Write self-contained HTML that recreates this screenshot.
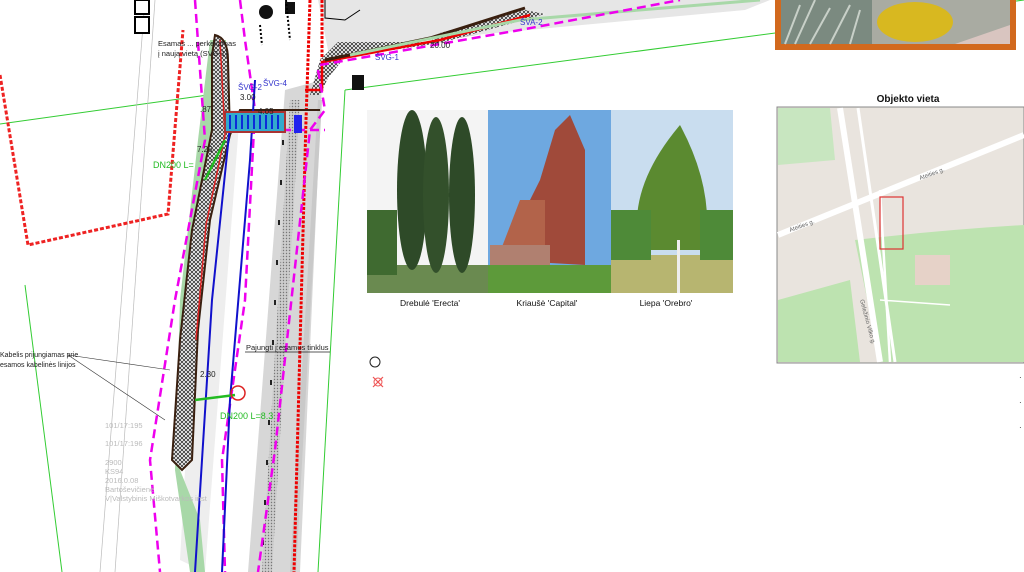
<!DOCTYPE html>
<html><head><meta charset="utf-8"><style>
html,body{margin:0;padding:0;background:#fff;width:1024px;height:572px;overflow:hidden}
svg{display:block}
text{font-family:"Liberation Sans",sans-serif}
</style></head><body>
<svg width="1024" height="572" viewBox="0 0 1024 572" xmlns="http://www.w3.org/2000/svg">
<defs>
<pattern id="hatch" width="4" height="4" patternUnits="userSpaceOnUse"><rect width="4" height="4" fill="#fff"/><path d="M0 0L4 4M4 0L0 4" stroke="#333" stroke-width="0.8"/></pattern>
<pattern id="dots" width="3" height="3" patternUnits="userSpaceOnUse"><rect width="3" height="3" fill="#ccc"/><circle cx="1.5" cy="1.5" r="0.7" fill="#777"/></pattern>
</defs>
<g stroke="#3c3" stroke-width="1" fill="none">
<path d="M0 124 L215 94"/><path d="M345 90 L1024 0"/><path d="M345 90 L318 572"/><path d="M25 285 L62 572"/>
</g>
<g stroke="#bbb" stroke-width="0.7" fill="none">
<path d="M155 0 L115 572"/><path d="M145 0 L100 572"/><path d="M520 30 L760 0"/><path d="M330 60 L560 20"/>
</g>
<path d="M0 75 L28 245 L168 214 L183 30" stroke="#e22" stroke-width="3" stroke-dasharray="4 2" fill="none"/>
<path d="M318 0 L770 0 L745 10 L420 40 L330 60 Z" fill="#e6e6e6"/>
<path d="M325 0 L325 18 L345 20 L360 10" stroke="#000" fill="none"/>
<path d="M285 90 L322 80 L300 572 L248 572 Z" fill="#d7d7d7"/>
<path d="M290 100 L300 100 L272 572 L262 572 Z" fill="url(#dots)"/>
<path d="M318 100 L322 100 L296 572 L290 572 Z" fill="#c9c9c9"/>
<path d="M310 0 L306 120 L294 572" stroke="#e00" stroke-width="3" stroke-dasharray="3 1.5" fill="none"/>
<path d="M322 0 L322 70" stroke="#e00" stroke-width="3" stroke-dasharray="3 1.5"/>
<g stroke="#222" stroke-width="2"><path d="M283 140v5M281 180v5M279 220v5M277 260v5M275 300v5M273 340v5M271 380v5M269 420v5M267 460v5M265 500v5M263 540v5"/></g>
<path d="M205 110 L240 110 L205 572 L180 560 Z" fill="#eee"/>
<path d="M210 40 L226 40 L225 130 L205 200 L195 300 L180 470 L200 520 L205 572 L190 572 L175 470 L180 300 L198 140 Z" fill="#a8d8a8"/>
<path d="M215 35 Q228 38 228 60 L230 135 L210 220 L198 330 L192 460 L182 470 L172 460 L180 340 L192 230 L212 130 L212 55 Z" fill="url(#hatch)" stroke="#3a2010" stroke-width="2"/>
<path d="M220 40 L225 135 L206 225 L196 340" stroke="#d22" stroke-width="1.5" fill="none"/>
<path d="M230 135 L240 110 L320 110" stroke="#3a2010" stroke-width="2" fill="none"/>
<path d="M310 95 L320 60 L338 42 L430 42 L440 33 L525 10 L545 14 L440 43 L345 57 L328 78 L320 95 Z" fill="url(#hatch)"/>
<path d="M305 90 L322 90 L322 62 L440 40 L530 15" stroke="#e00" stroke-width="2.5" fill="none"/>
<path d="M325 60 L430 38 L525 8" stroke="#3a2010" stroke-width="3" fill="none"/>
<path d="M350 55 L520 20 L760 0" stroke="#a8d8a8" stroke-width="3" fill="none"/>
<g stroke="#e0e" stroke-width="2.5" fill="none" stroke-dasharray="9 5">
<path d="M195 0 L205 140 L175 300 L150 460 L160 572"/>
<path d="M240 0 L245 40 L255 110 L245 300 L222 460 L225 572"/>
<path d="M318 70 L325 110 L310 130 L275 450 L258 572"/>
<path d="M320 65 L520 30 L680 0"/>
<path d="M240 130 L325 130"/>
</g>
<g stroke="#11c" stroke-width="2" fill="none">
<path d="M230 125 L212 300 L195 572"/>
<path d="M255 80 L250 160 L230 400 L222 572"/>
</g>
<rect x="225" y="112" width="60" height="20" fill="#3ac" stroke="#a33" stroke-width="2"/>
<g stroke="#00d" stroke-width="1.5"><path d="M230 115v14M236 115v14M242 115v14M248 115v14M254 115v14M260 115v14M266 115v14M272 115v14M278 115v14"/></g>
<rect x="294" y="115" width="8" height="18" fill="#22e"/>
<path d="M195 400 L235 395" stroke="#2b2" stroke-width="2.5"/>
<path d="M225 140 L205 180" stroke="#2b2" stroke-width="2.5"/>
<text x="153" y="168" font-size="9" fill="#2b2">DN200 L=</text>
<text x="220" y="419" font-size="9" fill="#2b2">DN200 L=8.3</text>
<circle cx="238" cy="393" r="7" fill="none" stroke="#d22" stroke-width="1.5"/>
<text x="158" y="46" font-size="7.5" fill="#222">Esamas ... perkeliamas</text>
<text x="158" y="56" font-size="7.5" fill="#222">į naują vietą (SVG-1)</text>
<text x="0" y="357" font-size="7" fill="#222">Kabelis prijungiamas prie</text>
<text x="0" y="367" font-size="7" fill="#222">esamos kabelinės linijos</text>
<path d="M68 355 L170 370 M68 355 L165 420" stroke="#333" stroke-width="0.6"/>
<text x="246" y="350" font-size="7.5" fill="#222">Pajungti į esamus tinklus</text>
<path d="M245 352 L330 352" stroke="#222" stroke-width="0.7"/>
<g font-family="Liberation Mono" font-size="7.5" fill="#bbb">
<text x="105" y="428">101/17:195</text><text x="105" y="446">101/17:196</text><text x="105" y="465">2900</text><text x="105" y="474">KS94</text><text x="105" y="483">2016.0.08</text><text x="105" y="492">Bartoševičienė</text><text x="105" y="501">V|Valstybinis Miškotvarkos inst</text>
</g>
<g font-size="8" fill="#33c"><text x="238" y="90">ŠVG-2</text><text x="263" y="86">ŠVG-4</text><text x="375" y="60">ŠVG-1</text><text x="520" y="25">ŠVA-2</text></g>
<g font-size="8" fill="#222"><text x="240" y="100">3.00</text><text x="200" y="112">.87</text><text x="258" y="114">4.05</text><text x="197" y="152">7.25</text><text x="430" y="48">20.00</text><text x="200" y="377">2.30</text></g>
<rect x="135" y="0" width="14" height="14" fill="#fff" stroke="#000" stroke-width="2"/><rect x="135" y="17" width="14" height="16" fill="#fff" stroke="#000" stroke-width="2"/>
<circle cx="266" cy="12" r="7" fill="#111"/><rect x="285" y="2" width="10" height="12" fill="#111"/>
<rect x="352" y="75" width="12" height="15" fill="#111"/>
<path d="M260 25 L262 45 M286 0 L290 40" stroke="#000" stroke-width="2" stroke-dasharray="2 2"/>
<path d="M375 362 m-5 0 a5 5 0 1 0 10 0 a5 5 0 1 0 -10 0" fill="none" stroke="#222"/>
<path d="M373 377 l10 10 M383 377 l-10 10" stroke="#e55" stroke-width="1.2"/><circle cx="378" cy="382" r="4" fill="none" stroke="#e55"/>
<rect x="775" y="0" width="241" height="50" fill="#d2691e"/>
<rect x="781" y="0" width="91" height="44" fill="#7b8a80"/>
<path d="M785 44 L800 5 M795 44 L815 0 M810 44 L830 8 M830 44 L850 5 M850 44 L860 10" stroke="#c8d0c8" stroke-width="2"/>
<rect x="872" y="0" width="138" height="44" fill="#a9aba2"/>
<ellipse cx="915" cy="22" rx="38" ry="20" fill="#d8b820"/>
<path d="M955 44 L1010 25 L1010 44Z" fill="#d9c5c0"/>
<rect x="367" y="110" width="121" height="183" fill="#f4f4f4"/>
<rect x="367" y="265" width="121" height="28" fill="#6a8a50"/>
<ellipse cx="412" cy="190" rx="15" ry="80" fill="#2e4a28"/><ellipse cx="436" cy="195" rx="13" ry="78" fill="#33502b"/><ellipse cx="462" cy="195" rx="13" ry="78" fill="#2e4a28"/>
<rect x="367" y="210" width="30" height="65" fill="#3f6a30"/>
<rect x="488" y="110" width="123" height="183" fill="#6ea8e0"/>
<rect x="488" y="265" width="123" height="28" fill="#5d9a3a"/>
<path d="M500 260 L540 180 L555 130 L570 115 L585 150 L585 265 Z" fill="#a04a3a"/>
<path d="M495 265 L520 200 L545 200 L545 265Z" fill="#b2634a"/>
<rect x="490" y="245" width="60" height="20" fill="#b08070"/>
<rect x="611" y="110" width="122" height="183" fill="#c9ddef"/>
<rect x="611" y="255" width="122" height="38" fill="#b7b570"/>
<path d="M640 250 Q625 190 680 125 Q715 190 705 250Z" fill="#5b8a30"/>
<rect x="611" y="210" width="40" height="50" fill="#4e8a38"/><rect x="700" y="210" width="33" height="50" fill="#4e8a38"/>
<rect x="677" y="240" width="3" height="53" fill="#eee"/>
<g font-size="8.5" fill="#111" text-anchor="middle"><text x="430" y="306">Drebulė 'Erecta'</text><text x="547" y="306">Kriaušė 'Capital'</text><text x="666" y="306">Liepa 'Orebro'</text></g>
<text x="908" y="102" font-size="10" font-weight="bold" text-anchor="middle" fill="#111">Objekto vieta</text>
<rect x="777" y="107" width="247" height="256" fill="#e9e4de" stroke="#888" stroke-width="1"/>
<path d="M778 108 L830 108 L835 160 L778 165Z" fill="#c8e6c0"/>
<path d="M855 240 Q940 230 1024 225 L1024 362 L880 362 Z" fill="#bde3b0"/>
<path d="M778 300 L850 280 L860 362 L778 362Z" fill="#bde3b0"/>
<rect x="915" y="255" width="35" height="30" fill="#e6d2c8"/>
<path d="M778 235 L1024 135" stroke="#fff" stroke-width="6"/>
<path d="M840 108 L880 362" stroke="#fff" stroke-width="6"/>
<path d="M858 108 L895 362" stroke="#fff" stroke-width="3"/>
<path d="M880 190 L890 362" stroke="#fff" stroke-width="2.5"/>
<path d="M880 300 L950 305" stroke="#fff" stroke-width="1.5"/>
<rect x="880" y="197" width="23" height="52" fill="none" stroke="#d33" stroke-width="1.2"/>
<g font-size="6" fill="#666"><text x="790" y="232" transform="rotate(-20 790 232)">Ateities g.</text><text x="920" y="180" transform="rotate(-20 920 180)">Ateities g.</text><text x="860" y="300" transform="rotate(75 860 300)">Geležinio Vilko g.</text></g>
<g fill="#222" font-size="8"><text x="1019" y="380">·</text><text x="1019" y="405">·</text><text x="1019" y="430">·</text></g>
</svg>
</body></html>
